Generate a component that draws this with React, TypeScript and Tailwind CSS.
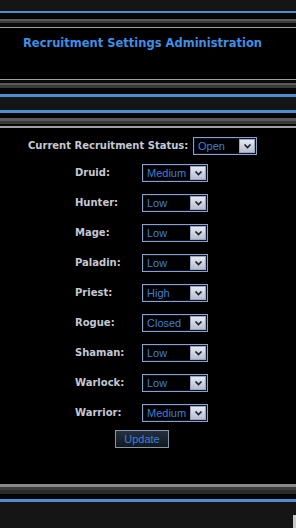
import React from "react";

const rows: [string, string][] = [
  ["Druid:", "Medium"],
  ["Hunter:", "Low"],
  ["Mage:", "Low"],
  ["Paladin:", "Low"],
  ["Priest:", "High"],
  ["Rogue:", "Closed"],
  ["Shaman:", "Low"],
  ["Warlock:", "Low"],
  ["Warrior:", "Medium"],
];

function Chevron() {
  return (
    <svg width="9" height="7" viewBox="0 0 9 7">
      <path d="M1.5 1.5 L4.5 4.5 L7.5 1.5" fill="none" stroke="#1a1f2a" strokeWidth="1.7" />
    </svg>
  );
}

function FakeSelect({ value, width }: { value: string; width: string }) {
  return (
    <div
      className={`${width} h-[18px] flex items-stretch bg-black border border-[#8aa0c4] shadow-[inset_0_0_0_1px_#0a1430]`}
    >
      <div
        className="flex-1 flex items-center pl-[4px] text-[11px] text-[#3d7fd8] leading-none"
        style={{ fontFamily: '"Liberation Sans", Arial, sans-serif' }}
      >
        {value}
      </div>
      <div className="w-[16px] my-[1px] mr-[1px] flex items-center justify-center bg-gradient-to-b from-[#e6e9f2] to-[#b9bfcf] border border-[#9aa4bc]">
        <Chevron />
      </div>
    </div>
  );
}

export default function App() {
  const label = "font-bold text-[10px] text-[#c4c8d2] leading-none";
  return (
    <div className="w-[296px] h-[528px] bg-black overflow-hidden" style={{ fontFamily: '"DejaVu Sans", Verdana, sans-serif' }}>
      {/* top stripes */}
      <div className="h-[11px] bg-[#151515]" />
      <div className="h-[2px] bg-[#4d8ed0]" />
      <div className="h-[6px] bg-[#050505]" />
      <div className="h-[2px] bg-[#5a5a5a]" />
      <div className="h-[2px] bg-[#3a3a3a]" />
      <div className="h-[4px] bg-[#0a0a0a]" />
      <div className="h-[1px] bg-[#a0a0a0]" />
      {/* title panel */}
      <div className="h-[51px] bg-black pl-[23px] pt-[10px]">
        <div className="font-bold text-[11.5px] text-[#3f8fe6] leading-none">
          Recruitment Settings Administration
        </div>
      </div>
      <div className="h-[1px] bg-[#a0a0a0]" />
      <div className="h-[3px] bg-[#0a0a0a]" />
      <div className="h-[2px] bg-[#5a5a5a]" />
      <div className="h-[3px] bg-[#3a3a3a]" />
      <div className="h-[6px] bg-[#050505]" />
      <div className="h-[3px] bg-[#4d8ed0]" />
      <div className="h-[13px] bg-[#151515]" />
      <div className="h-[3px] bg-[#4d8ed0]" />
      <div className="h-[5px] bg-[#050505]" />
      <div className="h-[3px] bg-[#5a5a5a]" />
      <div className="h-[3px] bg-[#3a3a3a]" />
      <div className="h-[2px] bg-[#0a0a0a]" />
      <div className="h-[2px] bg-[#a0a0a0]" />
      {/* form panel */}
      <div className="h-[356px] bg-black pt-[9px] flex flex-col">
        <div className="flex items-center h-[18px] pl-[28px]">
          <div className={`${label} w-[165px]`}>Current Recruitment Status:</div>
          <FakeSelect value="Open" width="w-[64px]" />
        </div>
        <div className="mt-[9px] grid grid-cols-[67px_66px] gap-y-[12px] pl-[75px]">
          {rows.map(([l, v]) => (
            <React.Fragment key={l}>
              <div className={`${label} h-[18px] flex items-center`}>{l}</div>
              <FakeSelect value={v} width="w-[66px]" />
            </React.Fragment>
          ))}
        </div>
        <div className="mt-[8px] pl-[115px]">
          <div
            className="w-[54px] h-[18px] flex items-center justify-center border border-[#8a96aa] bg-gradient-to-b from-[#24303e] to-[#121820] text-[11px] text-[#3d7fd8] leading-none"
            style={{ fontFamily: '"Liberation Sans", Arial, sans-serif' }}
          >
            Update
          </div>
        </div>
      </div>
      {/* bottom stripes */}
      <div className="h-[3px] bg-[#8a8a8a]" />
      <div className="h-[3px] bg-[#3c3c3c]" />
      <div className="h-[4px] bg-[#2a2a2a]" />
      <div className="h-[5px] bg-[#050505]" />
      <div className="h-[3px] bg-[#4d8ed0]" />
      <div className="h-[26px] bg-[#151515] flex justify-end items-end">
        <div className="w-[3px] h-[13px] bg-[#c8c8c8]" />
      </div>
    </div>
  );
}
